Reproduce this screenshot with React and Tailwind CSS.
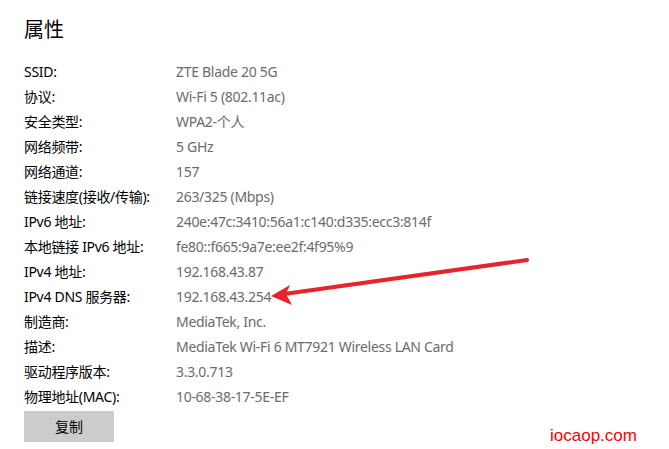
import React from 'react';

const rows = [
  ['SSID:', 'ZTE Blade 20 5G'],
  ['协议:', 'Wi-Fi 5 (802.11ac)'],
  ['安全类型:', 'WPA2-个人'],
  ['网络频带:', '5 GHz'],
  ['网络通道:', '157'],
  ['链接速度(接收/传输):', '263/325 (Mbps)'],
  ['IPv6 地址:', '240e:47c:3410:56a1:c140:d335:ecc3:814f'],
  ['本地链接 IPv6 地址:', 'fe80::f665:9a7e:ee2f:4f95%9'],
  ['IPv4 地址:', '192.168.43.87'],
  ['IPv4 DNS 服务器:', '192.168.43.254'],
  ['制造商:', 'MediaTek, Inc.'],
  ['描述:', 'MediaTek Wi-Fi 6 MT7921 Wireless LAN Card'],
  ['驱动程序版本:', '3.3.0.713'],
  ['物理地址(MAC):', '10-68-38-17-5E-EF'],
];

const font = { fontFamily: '"Noto Sans", "Noto Sans CJK SC", sans-serif' };

export default function App() {
  return (
    <div className="relative w-[669px] h-[449px] bg-white overflow-hidden" style={font}>
      <div className="pl-6 pt-[17px]">
        <h1 className="text-[20px] leading-[26px] text-black">属性</h1>
        <div className="mt-[16px] flex flex-col">
          {rows.map(([label, value]) => (
            <div key={label} className="flex h-[25px] items-center text-[14px] tracking-[-0.3px]">
              <span className="w-[152px] text-black">{label}</span>
              <span className="text-[#6b6b6b]">{value}</span>
            </div>
          ))}
        </div>
        <button className="mt-[2px] w-[90px] h-[31px] bg-[#cccccc] text-[14px] text-black">复制</button>
      </div>

      {/* annotation arrow */}
      <svg className="absolute left-0 top-0" width="669" height="449">
        <line x1="527" y1="260" x2="284" y2="294" stroke="#e8232b" strokeWidth="4" strokeLinecap="round" />
        <polygon points="271,296 290,285 286,294 292,305" fill="#e8232b" />
      </svg>

      <div className="absolute left-[550px] top-[423px] text-[17px] text-[#ff0000]" style={{ fontFamily: '"Liberation Sans", sans-serif' }}>
        iocaop.com
      </div>
    </div>
  );
}
